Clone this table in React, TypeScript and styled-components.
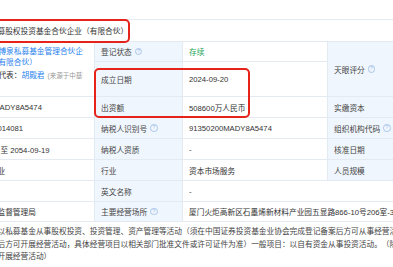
import * as React from "react";
import styled, { createGlobalStyle, css } from "styled-components";

const colors = {
  line: "#e4eaf2",
  labelBg: "#f0f6fd",
  text: "#333333",
  label: "#444444",
  link: "#1f7fef",
  green: "#22a35a",
  muted: "#9a9a9a",
  red: "#e5231b",
  help: "#a9c5ea",
};

const fonts = {
  text: `"Liberation Sans", "Noto Sans CJK SC", sans-serif`,
};

const GlobalStyle = createGlobalStyle`
  html, body {
    margin: 0;
    padding: 0;
    background: #ffffff;
    overflow: hidden;
  }
  body {
    font-family: ${fonts.text};
    font-size: 7.7px;
    color: ${colors.text};
    text-spacing-trim: space-all;
  }
`;

const Page = styled.div`
  width: 393px;
  height: 267px;
  overflow: hidden;
  padding-top: 19px;
  box-sizing: border-box;
`;

const Table = styled.div`
  position: relative;
  display: grid;
  grid-template-columns: 141px 88px 145px 88px 284px;
  grid-template-rows: 22px 20px 35px repeat(5, 21px) 20px auto;
  width: 746px;
  margin-left: -46px;
  border-top: 1px solid ${colors.line};
`;

type CellProps = {
  $kind?: "lead" | "label" | "value";
  $cols?: number;
  $rows?: number;
  $top?: boolean;
  $open?: boolean;
};

const Cell = styled.div<CellProps>`
  box-sizing: border-box;
  display: flex;
  align-items: ${(p) => (p.$top ? "flex-start" : "center")};
  min-width: 0;
  overflow: hidden;
  white-space: nowrap;
  padding: 0 6px;
  grid-column: span ${(p) => p.$cols ?? 1};
  grid-row: span ${(p) => p.$rows ?? 1};
  border-bottom: 1px solid ${colors.line};
  border-right: ${(p) => (p.$open ? "none" : `1px solid ${colors.line}`)};
  background: ${(p) => (p.$kind === "label" ? colors.labelBg : "#ffffff")};
  color: ${(p) => (p.$kind === "label" ? colors.label : colors.text)};
  ${(p) =>
    p.$kind === "lead" &&
    css`
      padding: 0 5px;
    `}
`;

const NameRow = styled(Cell)`
  grid-column: span 5;
  padding: 0 2px;
  overflow: visible;
  border-right: none;
`;

const NameBox = styled.div`
  position: relative;
  z-index: 1;
  display: flex;
  align-items: center;
  box-sizing: border-box;
  height: 24px;
  padding: 0 0 0 1px;
  border: 2px solid ${colors.red};
  border-radius: 5px;
  color: ${colors.text};
`;

const HolderCell = styled(Cell)`
  padding-top: 4px;
  gap: 4px;
`;

const Logo = styled.div`
  flex: none;
  width: 20px;
  height: 20px;
  border-radius: 3px;
  background: #eaf2fd;
`;

const HolderInfo = styled.div`
  display: flex;
  flex-direction: column;
  width: 110px;
  line-height: 11px;
`;

const HolderName = styled.span`
  white-space: normal;
  color: ${colors.link};
`;

const RepLine = styled.div`
  max-width: 100px;
  margin-top: 1.5px;
  overflow: hidden;
  white-space: nowrap;
`;

const Link = styled.span`
  color: ${colors.link};
`;

const Source = styled.span`
  margin-left: 3px;
  font-size: 6.5px;
  color: ${colors.muted};
`;

const Status = styled.span`
  color: ${colors.green};
`;

const Help = styled.span`
  display: inline-flex;
  align-items: center;
  justify-content: center;
  box-sizing: border-box;
  width: 7.5px;
  height: 7.5px;
  margin-left: 3px;
  border: 0.8px solid ${colors.help};
  border-radius: 50%;
  font-size: 5.5px;
  line-height: 1;
  color: ${colors.help};
`;

const ScopeCell = styled(Cell)`
  grid-column: span 5;
  align-items: flex-start;
  padding: 4px 5px;
  white-space: normal;
  border-right: none;
  border-bottom: none;
  color: #444444;
  line-height: 12.5px;
`;

const ScopeText = styled.p`
  width: 556px;
  margin: 0;
  flex: none;
`;

const Mark = styled.div`
  position: absolute;
  left: 140px;
  top: 48px;
  width: 156px;
  height: 50px;
  box-sizing: border-box;
  border: 2px solid ${colors.red};
  border-radius: 5px;
  pointer-events: none;
`;

const Label = ({ text, help }: { text: string; help?: boolean }) => (
  <Cell $kind="label">
    {text}
    {help && <Help>?</Help>}
  </Cell>
);

const scope =
  "许可项目：以私募基金从事股权投资、投资管理、资产管理等活动（须在中国证券投资基金业协会完成登记备案后方可从事经营活动）；依法须经批准的项目，经相关部门批准后方可开展经营活动，具体经营项目以相关部门批准文件或许可证件为准）一般项目：以自有资金从事投资活动。（除依法须经批准的项目外，凭营业执照依法自主开展经营活动）";

export default function App() {
  return (
    <>
      <GlobalStyle />
      <Page>
        <Table>
          <NameRow>
            <NameBox>厦门博泉私募股权投资基金合伙企业（有限合伙）</NameBox>
          </NameRow>

          <HolderCell $kind="lead" $rows={2} $top>
            <Logo />
            <HolderInfo>
              <HolderName>厦门博泉私募基金管理合伙企业（有限合伙）</HolderName>
              <RepLine>
                委派代表：<Link>胡殿君</Link>
                <Source>(来源于中基协)</Source>
              </RepLine>
            </HolderInfo>
          </HolderCell>
          <Label text="登记状态" help />
          <Cell $kind="value">
            <Status>存续</Status>
          </Cell>
          <Cell $kind="label" $rows={2}>
            天眼评分
            <Help>?</Help>
          </Cell>
          <Cell $kind="value" $rows={2} $open />

          <Label text="成立日期" />
          <Cell $kind="value">2024-09-20</Cell>

          <Cell $kind="lead">91350200MADY8A5474</Cell>
          <Label text="出资额" />
          <Cell $kind="value">508600万人民币</Cell>
          <Label text="实缴资本" />
          <Cell $kind="value" $open>-</Cell>

          <Cell $kind="lead">350200320014081</Cell>
          <Label text="纳税人识别号" help />
          <Cell $kind="value">91350200MADY8A5474</Cell>
          <Label text="组织机构代码" help />
          <Cell $kind="value" $open>MADY8A54-7</Cell>

          <Cell $kind="lead">2024-09-20 至 2054-09-19</Cell>
          <Label text="纳税人资质" />
          <Cell $kind="value">-</Cell>
          <Label text="核准日期" />
          <Cell $kind="value" $open>2024-09-20</Cell>

          <Cell $kind="lead">有限合伙企业</Cell>
          <Label text="行业" />
          <Cell $kind="value">资本市场服务</Cell>
          <Label text="人员规模" />
          <Cell $kind="value" $open>-</Cell>

          <Cell $kind="lead" />
          <Label text="英文名称" />
          <Cell $kind="value" $cols={3} $open>-</Cell>

          <Cell $kind="lead">厦门市市场监督管理局</Cell>
          <Label text="主要经营场所" help />
          <Cell $kind="value" $cols={3} $open>
            厦门火炬高新区石墨烯新材料产业园五显路866-10号206室-3
          </Cell>

          <ScopeCell>
            <ScopeText>{scope}</ScopeText>
          </ScopeCell>

          <Mark />
        </Table>
      </Page>
    </>
  );
}
